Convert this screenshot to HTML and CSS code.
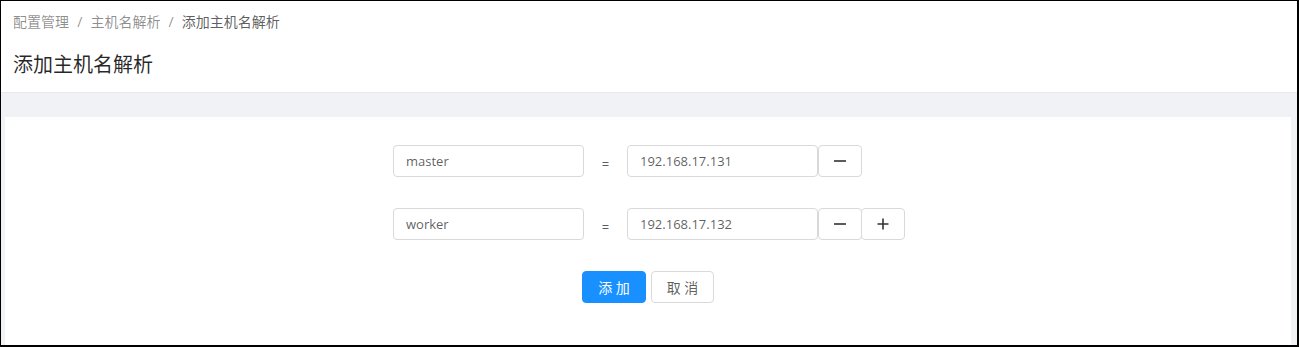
FILE: index.html
```html
<!DOCTYPE html>
<html lang="zh-CN">
<head>
  <meta charset="UTF-8" />
  <title>添加主机名解析</title>
  <link rel="stylesheet" href="styles.css">
</head>
<body>
  <div class="page-header">
    <div class="breadcrumb">
      <span class="crumb">配置管理</span>
      <span class="sep">/</span>
      <span class="crumb">主机名解析</span>
      <span class="sep">/</span>
      <span class="crumb current">添加主机名解析</span>
    </div>
    <h2 class="title">添加主机名解析</h2>
  </div>

  <div class="content">
    <div class="card">
      <form class="hosts-form">
        <div class="host-row">
          <input class="input" type="text" value="master" />
          <span class="eq">=</span>
          <input class="input" type="text" value="192.168.17.131" />
          <button type="button" class="icon-btn" aria-label="删除">
            <svg width="14" height="14" viewBox="0 0 14 14"><path d="M1 7h12" stroke="#333" stroke-width="1.6"/></svg>
          </button>
        </div>
        <div class="host-row">
          <input class="input" type="text" value="worker" />
          <span class="eq">=</span>
          <input class="input" type="text" value="192.168.17.132" />
          <button type="button" class="icon-btn" aria-label="删除">
            <svg width="14" height="14" viewBox="0 0 14 14"><path d="M1 7h12" stroke="#333" stroke-width="1.6"/></svg>
          </button>
          <button type="button" class="icon-btn" aria-label="添加">
            <svg width="14" height="14" viewBox="0 0 14 14"><path d="M1.5 7h11M7 1.5v11" stroke="#333" stroke-width="1.6"/></svg>
          </button>
        </div>
        <div class="actions">
          <button type="submit" class="btn btn-primary">添 加</button>
          <button type="button" class="btn">取 消</button>
        </div>
      </form>
    </div>
  </div>
</body>
</html>
```

FILE: styles.css
```css
* {
  box-sizing: border-box;
}

html, body {
  height: 347px;
}

body {
  margin: 0;
  overflow: hidden;
  border-style: solid;
  border-color: #000;
  border-width: 1px 2px 2px 1px;
  background: #f0f2f5;
  font-family: "Open Sans", "Noto Sans CJK SC", sans-serif;
  font-size: 14px;
  color: rgba(0, 0, 0, 0.65);
  display: flex;
  flex-direction: column;
}

.page-header {
  background: #fff;
  height: 92px;
  padding: 10px 12px 0;
  border-bottom: 1px solid #e8e8e8;
}

.breadcrumb {
  font-size: 14px;
  line-height: 22px;
  color: rgba(0, 0, 0, 0.45);
}

.breadcrumb .sep {
  margin: 0 4.5px;
}

.breadcrumb .current {
  color: rgba(0, 0, 0, 0.65);
}

.title {
  margin: 18px 0 0;
  font-size: 20px;
  font-weight: 400;
  line-height: 28px;
  color: rgba(0, 0, 0, 0.85);
}

.content {
  flex: 1;
  padding: 24px 6px 0 4px;
  display: flex;
}

.card {
  flex: 1;
  background: #fff;
  padding-top: 28px;
}

.hosts-form {
  width: 510px;
  margin: 0 auto;
}

.host-row {
  display: flex;
  align-items: center;
  height: 32px;
  margin-bottom: 31px;
}

.host-row > * {
  flex: none;
}

.input {
  width: 191px;
  height: 32px;
  padding: 4px 12px;
  border: 1px solid #d9d9d9;
  border-radius: 4px;
  font: inherit;
  font-size: 13px;
  color: rgba(0, 0, 0, 0.65);
  outline: none;
}

.eq {
  width: 43px;
  text-align: center;
  font-size: 13px;
  padding-top: 5px;
}

.icon-btn {
  width: 44px;
  height: 32px;
  padding: 0;
  background: #fff;
  border: 1px solid #d9d9d9;
  border-radius: 4px;
  display: flex;
  align-items: center;
  justify-content: center;
  cursor: pointer;
}

.icon-btn + .icon-btn {
  margin-left: -1px;
}

.actions {
  display: flex;
  justify-content: center;
  gap: 5px;
  margin-left: -137px;
  margin-right: -137px;
}

.btn {
  height: 32px;
  width: 63px;
  padding: 0;
  font: inherit;
  font-size: 14px;
  background: #fff;
  color: rgba(0, 0, 0, 0.65);
  border: 1px solid #d9d9d9;
  border-radius: 4px;
  cursor: pointer;
}

.btn-primary {
  width: 64px;
  background: #1890ff;
  border-color: #1890ff;
  color: #fff;
}
```
